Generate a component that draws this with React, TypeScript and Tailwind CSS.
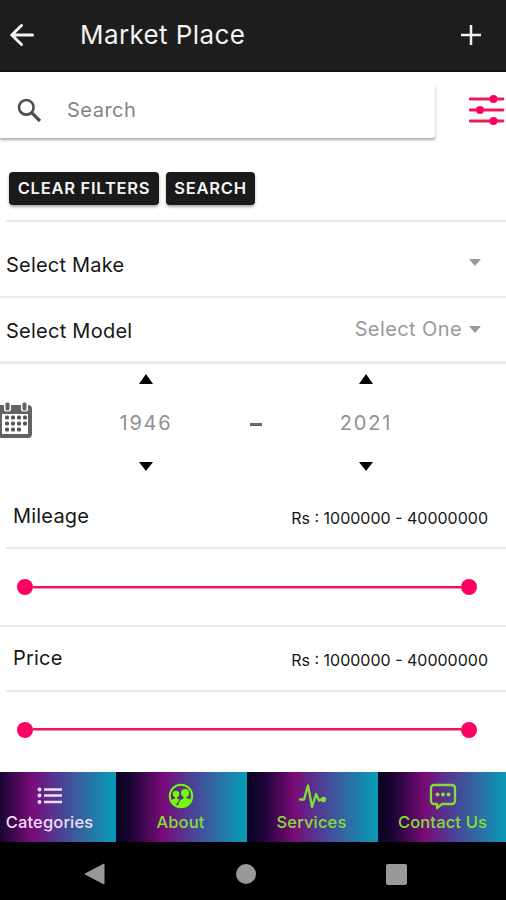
import type { ReactNode } from "react";

const ranges = [
  { label: "Mileage", value: "Rs : 1000000 - 40000000" },
  { label: "Price", value: "Rs : 1000000 - 40000000" },
];

const Caret = () => (
  <svg width="12" height="7" viewBox="0 0 12 7" fill="#999999">
    <path d="M0 0h12L6 7z" />
  </svg>
);

const YearPicker = ({ year }: { year: string }) => (
  <div className="flex w-[60px] flex-col items-center">
    <svg width="14" height="10" viewBox="0 0 14 10">
      <path d="M0 10h14L7 0z" />
    </svg>
    <span className="mt-[25px] h-7 text-[20px] leading-7 tracking-[1.8px] text-[#919191]">{year}</span>
    <svg width="14" height="9" viewBox="0 0 14 9" className="mt-[25px]">
      <path d="M0 0h14L7 9z" />
    </svg>
  </div>
);

const RangeSlider = () => (
  <div className="flex h-[76px] items-center pl-[17px] pr-[29px]">
    <div className="size-4 rounded-full bg-[#ff0062]" />
    <div className="h-[3px] flex-1 border-b border-[#fb8aac] bg-[#ef1650]" />
    <div className="size-4 rounded-full bg-[#ff0062]" />
  </div>
);

const CalendarIcon = () => (
  <svg width="34" height="38" viewBox="0 0 34 38" className="shrink-0">
    <path d="M-3 4h31a4 4 0 0 1 4 4v25a4 4 0 0 1-4 4H-3z" fill="#636363" />
    <path d="M2 13h26v20H2z" fill="#fff" />
    <rect x="4" y="2" width="7" height="8.500" rx="2" fill="#fff" />
    <rect x="21" y="2" width="7" height="8.500" rx="2" fill="#fff" />
    <rect x="5.500" y="1.500" width="4" height="8" rx="1.500" fill="#636363" />
    <rect x="22.500" y="1.500" width="4" height="8" rx="1.500" fill="#636363" />
    <g fill="#555">
      {[5, 11, 17, 23].map((x) => (
        <rect key={x} x={x} y="14.500" width="4" height="4" rx="1.500" />
      ))}
      {[5, 11, 17, 23].map((x) => (
        <rect key={x} x={x} y="20.500" width="4" height="4" rx="1.500" />
      ))}
      {[5, 11, 17].map((x) => (
        <rect key={x} x={x} y="26.500" width="4" height="4" rx="1.500" />
      ))}
    </g>
  </svg>
);

const Tab = ({ label, active, children }: { label: ReactNode; active?: boolean; children: ReactNode }) => (
  <div
    className={`flex w-[131px] shrink-0 flex-col items-center bg-[linear-gradient(90deg,#08041f_0%,#1c0436_12%,#790b78_36%,#4f3d94_56%,#2f6aa3_76%,#0b97b5_96%)] pt-[10px] pr-[2px] ${
      active ? "text-[#eeddf5]" : "text-[#82df38]"
    }`}
  >
    <svg width="30" height="28" viewBox="0 0 30 28" fill="none" stroke="currentColor">
      {children}
    </svg>
    <span className="text-[16.5px] leading-6 font-medium tracking-[0.15px] whitespace-nowrap">{label}</span>
  </div>
);

const App = () => {
  return (
    <div className="flex h-[900px] w-[506px] flex-col overflow-hidden bg-white font-['Inter',sans-serif] text-[#161616]">
      {/* Header */}
      <header className="flex h-[72px] shrink-0 items-center border-b-2 border-[#111] bg-[#1d1d1d] pl-[10px] pr-6">
        <svg width="24" height="24" viewBox="0 0 24 24" fill="none" stroke="#f2f2f2" strokeWidth="3" strokeLinecap="round">
          <path d="M2 12h20.500M11.500 2.500L1.800 12l9.700 9.500" />
        </svg>
        <h1 className="ml-[46px] flex-1 text-[26px] leading-8 tracking-[0.4px] text-[#f2f2f2]">Market Place</h1>
        <svg width="22" height="22" viewBox="0 0 22 22" fill="none" stroke="#f2f2f2" strokeWidth="2.5">
          <path d="M1 11h20M11 1v20" />
        </svg>
      </header>

      {/* Search bar */}
      <div className="mt-[11px] flex h-[55px] shrink-0 items-center">
        <div className="flex h-full w-[435px] items-center rounded-r-[3px] pl-[17px] shadow-[0_2px_3px_rgba(0,0,0,0.35)]">
          <svg width="25" height="25" viewBox="0 0 25 25" fill="none" stroke="#4d4d4d" strokeWidth="2.6">
            <circle cx="9.3" cy="9.3" r="7.3" />
            <path d="M14.5 14.5l8.5 8.5" strokeWidth="3.2" />
          </svg>
          <span className="mb-[2px] ml-[25px] text-[20px] leading-6 tracking-[0.5px] text-[#858585]">Search</span>
        </div>
        <svg width="36" height="32" viewBox="0 0 36 32" className="mb-[2px] ml-[34px] shrink-0">
          <path d="M1 5h33M1 16h33M1 27h33" stroke="#e91c54" strokeWidth="2.8" strokeLinecap="round" />
          <g fill="#ff0062">
            <circle cx="24.5" cy="5" r="4" />
            <circle cx="11" cy="16" r="4" />
            <circle cx="24.5" cy="27" r="4" />
          </g>
        </svg>
      </div>

      <div className="flex h-[82px] shrink-0 gap-[7px] pt-[34px] pl-[9px] text-[16.5px] font-semibold tracking-[0.75px] text-[#f5f5f5]">
        <button className="h-[33px] w-[150px] rounded-[4px] bg-[#1a1a1a] whitespace-nowrap shadow-[0_2px_3px_rgba(0,0,0,0.35)]">CLEAR FILTERS</button>
        <button className="h-[33px] w-[89px] rounded-[4px] bg-[#1a1a1a] shadow-[0_2px_3px_rgba(0,0,0,0.35)]">SEARCH</button>
      </div>

      {/* Make and model */}
      <div className="ml-[6px] h-[2px] shrink-0 bg-[#e9e9e9]" />
      <div className="flex h-[76px] shrink-0 items-center justify-between border-b-2 border-[#ececec] pt-[12px] pr-[25px] pl-[6px]">
        <span className="text-[20px] leading-6 tracking-[0.2px]">Select Make</span>
        <div className="mb-[6px]">
          <Caret />
        </div>
      </div>
      <div className="flex h-[66px] shrink-0 items-center justify-between border-b-[3px] border-[#ececec] pt-[2px] pr-[25px] pl-[6px]">
        <span className="text-[20px] leading-6 tracking-[0.25px]">Select Model</span>
        <div className="mb-[3px] flex items-center gap-[7px] text-[#999999]">
          <span className="text-[20px] leading-6 tracking-[0.4px]">Select One</span>
          <Caret />
        </div>
      </div>

      {/* Year range */}
      <div className="flex h-[120px] shrink-0 items-start pt-[10px]">
        <div className="mt-[27px]">
          <CalendarIcon />
        </div>
        <div className="ml-[82px]">
          <YearPicker year="1946" />
        </div>
        <div className="mt-[49px] ml-[74px] h-[3px] w-[12px] bg-[#666]" />
        <div className="ml-[74px]">
          <YearPicker year="2021" />
        </div>
      </div>

      {/* Sliders */}
      {ranges.map((range) => (
        <div key={range.label} className="h-[142.5px] shrink-0">
          <div className="flex h-[63px] items-center justify-between pr-[18px] pl-[13px]">
            <span className="text-[20px] leading-6 tracking-[0.2px]">{range.label}</span>
            <span className="mt-[4px] text-[16px] leading-6">{range.value}</span>
          </div>
          <div className="ml-[6px] h-[2px] bg-[#e8e8e8]" />
          <RangeSlider />
          {range.label === "Mileage" && <div className="h-[2px] bg-[#ececec]" />}
        </div>
      ))}

      {/* Tab bar */}
      <nav className="mt-auto -ml-[15px] flex h-[70px] shrink-0">
        <Tab label="Categories" active>
          <g strokeWidth="2.5">
            <path d="M9 7.500h18M9 13.500h18M9 20h18" />
          </g>
          <g fill="currentColor" stroke="none">
            <circle cx="4.500" cy="7.500" r="2" />
            <circle cx="4.500" cy="13.500" r="2" />
            <circle cx="4.500" cy="20" r="2" />
          </g>
        </Tab>
        <Tab label="About">
          <circle cx="15" cy="14" r="11.200" stroke="#73fa0a" strokeWidth="2" />
          <g fill="#73fa0a" stroke="none">
            <circle cx="10" cy="12" r="3.300" />
            <circle cx="19" cy="11" r="4" />
            <path d="M9 14h2v4H9zM17.500 14h3v4h-3z" />
            <path d="M5 19c2-3 6-3 8.500-1.500L10 23c-2-1-4-2-5-4z" />
            <path d="M12 24.500c0-9 10-9.500 13-6.500-2 5-7 7.500-13 6.500z" />
          </g>
        </Tab>
        <Tab label="Services">
          <g strokeWidth="2.300" strokeLinejoin="round" strokeLinecap="round">
            <path d="M3 17.500h4L11 3.500l4 21.500 4-13 3 6.500 2-1h3" />
            <circle cx="26.500" cy="17.500" r="1.500" fill="currentColor" />
          </g>
        </Tab>
        <Tab label="Contact Us">
          <path
            d="M6 3h18a3 3 0 0 1 3 3v13a3 3 0 0 1-3 3H14l-5 4v-4H6a3 3 0 0 1-3-3V6a3 3 0 0 1 3-3z"
            strokeWidth="2.300"
            strokeLinejoin="round"
          />
          <g fill="currentColor" stroke="none">
            <circle cx="9.500" cy="12.500" r="2" />
            <circle cx="15" cy="12.500" r="2" />
            <circle cx="20.500" cy="12.500" r="2" />
          </g>
        </Tab>
      </nav>

      {/* System navigation */}
      <div className="flex h-[58px] shrink-0 items-center justify-between bg-black pt-[6px] pr-[99px] pl-[84px]">
        <svg width="21" height="22" viewBox="0 0 21 22" fill="#999999">
          <path d="M20 1v20L1 11z" stroke="#999999" strokeLinejoin="round" />
        </svg>
        <div className="size-5 rounded-full bg-[#999999]" />
        <div className="size-[21px] rounded-[2px] bg-[#999999]" />
      </div>
    </div>
  );
};

export default App;
